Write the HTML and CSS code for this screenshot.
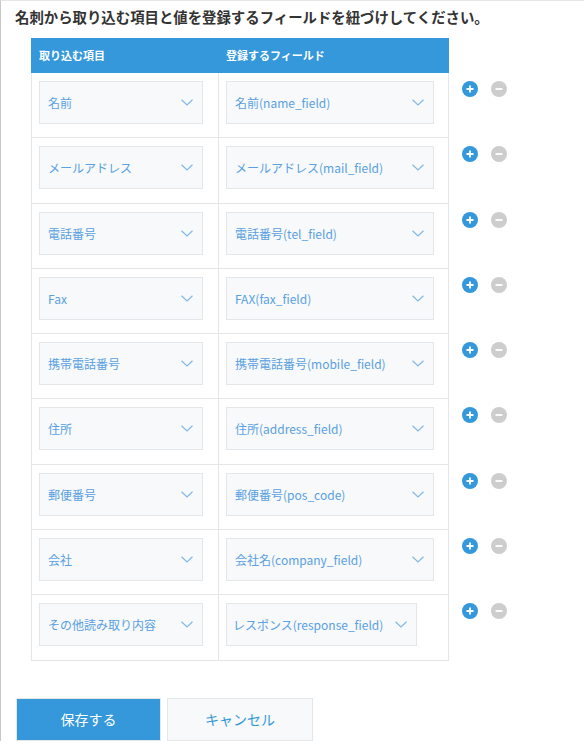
FILE: index.html
```html
<!DOCTYPE html>
<html lang="ja">
<head>
<meta charset="utf-8">
<link rel="stylesheet" href="styles.css">
</head>
<body>
<div class="page">
  <h1 class="title">名刺から取り込む項目と値を登録するフィールドを紐づけしてください。</h1>
  <div class="grid">
    <div class="head">取り込む項目</div>
    <div class="head">登録するフィールド</div>
    <div class="blank"></div>

    <div class="cell c1"><div class="sel"><span>名前</span><svg class="chev" viewBox="0 0 12 7"><path d="M0.5 0.8 L6 6 L11.5 0.8"/></svg></div></div>
    <div class="cell c2"><div class="sel"><span>名前(name_field)</span><svg class="chev" viewBox="0 0 12 7"><path d="M0.5 0.8 L6 6 L11.5 0.8"/></svg></div></div>
    <div class="acts"><svg class="btn-ico" viewBox="0 0 16 16"><circle cx="8" cy="8" r="8" class="plus-bg"/><path d="M4.5 8h7M8 4.5v7" class="ico-line"/></svg><svg class="btn-ico" viewBox="0 0 16 16"><circle cx="8" cy="8" r="8" class="minus-bg"/><path d="M4.5 8h7" class="ico-line"/></svg></div>

    <div class="cell c1"><div class="sel"><span>メールアドレス</span><svg class="chev" viewBox="0 0 12 7"><path d="M0.5 0.8 L6 6 L11.5 0.8"/></svg></div></div>
    <div class="cell c2"><div class="sel"><span>メールアドレス(mail_field)</span><svg class="chev" viewBox="0 0 12 7"><path d="M0.5 0.8 L6 6 L11.5 0.8"/></svg></div></div>
    <div class="acts"><svg class="btn-ico" viewBox="0 0 16 16"><circle cx="8" cy="8" r="8" class="plus-bg"/><path d="M4.5 8h7M8 4.5v7" class="ico-line"/></svg><svg class="btn-ico" viewBox="0 0 16 16"><circle cx="8" cy="8" r="8" class="minus-bg"/><path d="M4.5 8h7" class="ico-line"/></svg></div>

    <div class="cell c1"><div class="sel"><span>電話番号</span><svg class="chev" viewBox="0 0 12 7"><path d="M0.5 0.8 L6 6 L11.5 0.8"/></svg></div></div>
    <div class="cell c2"><div class="sel"><span>電話番号(tel_field)</span><svg class="chev" viewBox="0 0 12 7"><path d="M0.5 0.8 L6 6 L11.5 0.8"/></svg></div></div>
    <div class="acts"><svg class="btn-ico" viewBox="0 0 16 16"><circle cx="8" cy="8" r="8" class="plus-bg"/><path d="M4.5 8h7M8 4.5v7" class="ico-line"/></svg><svg class="btn-ico" viewBox="0 0 16 16"><circle cx="8" cy="8" r="8" class="minus-bg"/><path d="M4.5 8h7" class="ico-line"/></svg></div>

    <div class="cell c1"><div class="sel"><span>Fax</span><svg class="chev" viewBox="0 0 12 7"><path d="M0.5 0.8 L6 6 L11.5 0.8"/></svg></div></div>
    <div class="cell c2"><div class="sel"><span>FAX(fax_field)</span><svg class="chev" viewBox="0 0 12 7"><path d="M0.5 0.8 L6 6 L11.5 0.8"/></svg></div></div>
    <div class="acts"><svg class="btn-ico" viewBox="0 0 16 16"><circle cx="8" cy="8" r="8" class="plus-bg"/><path d="M4.5 8h7M8 4.5v7" class="ico-line"/></svg><svg class="btn-ico" viewBox="0 0 16 16"><circle cx="8" cy="8" r="8" class="minus-bg"/><path d="M4.5 8h7" class="ico-line"/></svg></div>

    <div class="cell c1"><div class="sel"><span>携帯電話番号</span><svg class="chev" viewBox="0 0 12 7"><path d="M0.5 0.8 L6 6 L11.5 0.8"/></svg></div></div>
    <div class="cell c2"><div class="sel"><span>携帯電話番号(mobile_field)</span><svg class="chev" viewBox="0 0 12 7"><path d="M0.5 0.8 L6 6 L11.5 0.8"/></svg></div></div>
    <div class="acts"><svg class="btn-ico" viewBox="0 0 16 16"><circle cx="8" cy="8" r="8" class="plus-bg"/><path d="M4.5 8h7M8 4.5v7" class="ico-line"/></svg><svg class="btn-ico" viewBox="0 0 16 16"><circle cx="8" cy="8" r="8" class="minus-bg"/><path d="M4.5 8h7" class="ico-line"/></svg></div>

    <div class="cell c1"><div class="sel"><span>住所</span><svg class="chev" viewBox="0 0 12 7"><path d="M0.5 0.8 L6 6 L11.5 0.8"/></svg></div></div>
    <div class="cell c2"><div class="sel"><span>住所(address_field)</span><svg class="chev" viewBox="0 0 12 7"><path d="M0.5 0.8 L6 6 L11.5 0.8"/></svg></div></div>
    <div class="acts"><svg class="btn-ico" viewBox="0 0 16 16"><circle cx="8" cy="8" r="8" class="plus-bg"/><path d="M4.5 8h7M8 4.5v7" class="ico-line"/></svg><svg class="btn-ico" viewBox="0 0 16 16"><circle cx="8" cy="8" r="8" class="minus-bg"/><path d="M4.5 8h7" class="ico-line"/></svg></div>

    <div class="cell c1"><div class="sel"><span>郵便番号</span><svg class="chev" viewBox="0 0 12 7"><path d="M0.5 0.8 L6 6 L11.5 0.8"/></svg></div></div>
    <div class="cell c2"><div class="sel"><span>郵便番号(pos_code)</span><svg class="chev" viewBox="0 0 12 7"><path d="M0.5 0.8 L6 6 L11.5 0.8"/></svg></div></div>
    <div class="acts"><svg class="btn-ico" viewBox="0 0 16 16"><circle cx="8" cy="8" r="8" class="plus-bg"/><path d="M4.5 8h7M8 4.5v7" class="ico-line"/></svg><svg class="btn-ico" viewBox="0 0 16 16"><circle cx="8" cy="8" r="8" class="minus-bg"/><path d="M4.5 8h7" class="ico-line"/></svg></div>

    <div class="cell c1"><div class="sel"><span>会社</span><svg class="chev" viewBox="0 0 12 7"><path d="M0.5 0.8 L6 6 L11.5 0.8"/></svg></div></div>
    <div class="cell c2"><div class="sel"><span>会社名(company_field)</span><svg class="chev" viewBox="0 0 12 7"><path d="M0.5 0.8 L6 6 L11.5 0.8"/></svg></div></div>
    <div class="acts"><svg class="btn-ico" viewBox="0 0 16 16"><circle cx="8" cy="8" r="8" class="plus-bg"/><path d="M4.5 8h7M8 4.5v7" class="ico-line"/></svg><svg class="btn-ico" viewBox="0 0 16 16"><circle cx="8" cy="8" r="8" class="minus-bg"/><path d="M4.5 8h7" class="ico-line"/></svg></div>

    <div class="cell c1"><div class="sel"><span>その他読み取り内容</span><svg class="chev" viewBox="0 0 12 7"><path d="M0.5 0.8 L6 6 L11.5 0.8"/></svg></div></div>
    <div class="cell c2"><div class="sel sel-short"><span>レスポンス(response_field)</span><svg class="chev" viewBox="0 0 12 7"><path d="M0.5 0.8 L6 6 L11.5 0.8"/></svg></div></div>
    <div class="acts"><svg class="btn-ico" viewBox="0 0 16 16"><circle cx="8" cy="8" r="8" class="plus-bg"/><path d="M4.5 8h7M8 4.5v7" class="ico-line"/></svg><svg class="btn-ico" viewBox="0 0 16 16"><circle cx="8" cy="8" r="8" class="minus-bg"/><path d="M4.5 8h7" class="ico-line"/></svg></div>
  </div>
  <div class="buttons">
    <button class="b save">保存する</button>
    <button class="b cancel">キャンセル</button>
  </div>
</div>
</body>
</html>
```
FILE: styles.css
```css
html, body {
  margin: 0;
  padding: 0;
  background: #fff;
}
body {
  font-family: "Noto Sans CJK JP", "Noto Sans", sans-serif;
  color: #333;
}
.page {
  box-sizing: border-box;
  height: 741px;
  border-top: 1px solid #e6e6e6;
  border-left: 1px solid #c9c9c9;
  padding: 6px 0 0 14px;
}
.title {
  margin: 0;
  font-size: 14.4px;
  line-height: 20px;
  font-weight: 700;
  color: #333;
}
.grid {
  display: grid;
  grid-template-columns: 188px 230px auto;
  grid-auto-rows: auto;
  margin: 11px 0 0 16px;
}
.head {
  height: 35px;
  background: #3498db;
  color: #fff;
  font-size: 11px;
  font-weight: 700;
  line-height: 35px;
  padding-left: 8px;
  box-sizing: border-box;
}
.head + .head {
  padding-left: 7px;
}
.cell {
  box-sizing: border-box;
  height: 65.3px;
  border-right: 1px solid #e3e7ea;
  border-bottom: 1px solid #e3e7ea;
  padding: 8px 0 0 7px;
}
.c1 {
  border-left: 1px solid #e3e7ea;
  padding-left: 7px;
}
.c2 {
  padding-left: 7px;
}
.sel {
  box-sizing: border-box;
  height: 43px;
  width: 164px;
  background: #f7f9fa;
  border: 1px solid #e3e7ea;
  display: flex;
  align-items: center;
  justify-content: space-between;
  padding: 0 9px 0 8px;
  font-size: 12px;
  color: #5aa0e2;
  white-space: nowrap;
}
.c2 .sel {
  width: 208px;
}
.c2 .sel.sel-short {
  width: 191px;
  padding-left: 6px;
}
.chev {
  width: 12px;
  height: 7px;
  flex: none;
  fill: none;
  stroke: #82b8e8;
  stroke-width: 1.2;
}
.acts {
  display: flex;
  gap: 13px;
  padding: 8px 0 0 13px;
  align-items: flex-start;
}
.btn-ico {
  width: 16px;
  height: 16px;
  display: block;
}
.plus-bg {
  fill: #3498db;
}
.minus-bg {
  fill: #cdcdcd;
}
.ico-line {
  stroke: #fff;
  stroke-width: 1.8;
  fill: none;
}
.buttons {
  display: flex;
  gap: 6px;
  margin: 37px 0 0 1px;
}
.b {
  box-sizing: border-box;
  height: 43px;
  font-family: "Noto Sans CJK JP", "Noto Sans", sans-serif;
  font-size: 14px;
  border: 1px solid #e3e7ea;
  padding: 0;
  cursor: pointer;
}
.save {
  width: 145px;
  background: #3498db;
  color: #fff;
}
.cancel {
  width: 146px;
  background: #f7f9fa;
  color: #3498db;
}
```
